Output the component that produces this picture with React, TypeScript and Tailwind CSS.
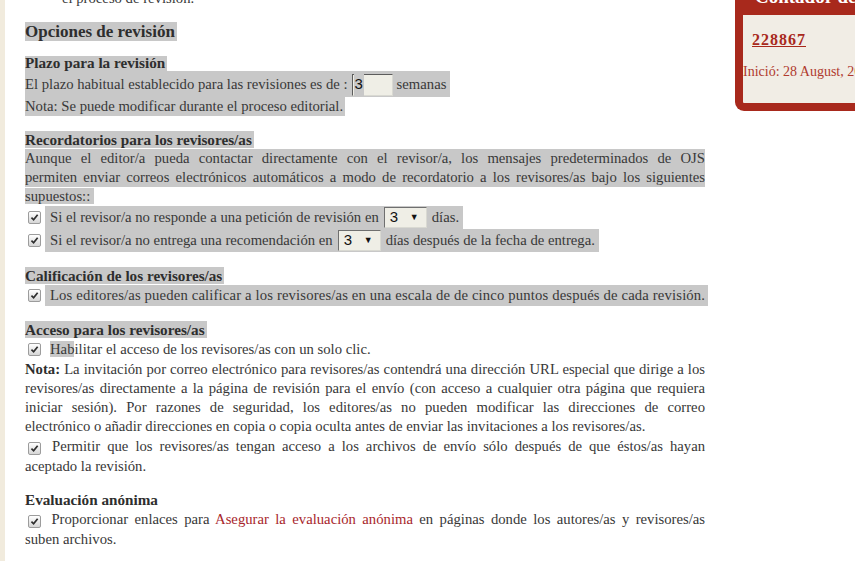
import React from "react";

const hl = "bg-[#c8c8c8]";
const lineJustify = "text-justify [text-align-last:justify]";

const Check: React.FC = () => (
  <span className="inline-flex h-[13px] w-[13px] shrink-0 items-center justify-center rounded-[2px] border border-[#9c9c9c] bg-gradient-to-b from-white to-[#d6d6d6] align-[-2px]">
    <svg viewBox="0 0 10 10" className="h-[9px] w-[9px]">
      <path d="M1.6 5.2 L4 7.5 L8.5 1.9" fill="none" stroke="#2e2e2e" strokeWidth="1.9" />
    </svg>
  </span>
);

const Select: React.FC = () => (
  <span className="mx-[5px] inline-flex h-[21px] w-[43px] items-center justify-between border border-[#6f6f6f] border-r-[#d9d9d2] border-b-[#d9d9d2] bg-[#efeee6] pl-[5px] pr-[7px] font-['Liberation_Sans',sans-serif] text-[15px] text-[#111]">
    <span>3</span>
    <span className="text-[9px]">▼</span>
  </span>
);

const Section: React.FC<{ title: string; children: React.ReactNode; mark?: boolean }> = ({
  title,
  children,
  mark = true,
}) => (
  <div className="mt-[14px]">
    <div className="h-[19px] text-[15.2px] leading-[19px]">
      <span className={`pr-[2px] font-bold text-[#2e2e2e] ${mark ? hl : ""}`}>{title}</span>
    </div>
    {children}
  </div>
);

const App: React.FC = () => {
  return (
    <div className="flex h-[561px] w-[855px] overflow-hidden bg-white font-['Liberation_Serif',serif] text-[14.7px] text-[#383838]">
      <div className="w-[5px] shrink-0 bg-[#f1ebdd]" />

      {/* main column */}
      <main className="w-[700px] shrink-0 pl-[20px]">
        <div className="-mt-[11px] pl-[37px] leading-[19px]">el proceso de revisión.</div>

        <div className="mt-[14px] h-[19px] text-[17px] leading-[19px]">
          <span className={`pr-[2px] font-bold text-[#2e2e2e] ${hl}`}>Opciones de revisión</span>
        </div>

        {/* Plazo */}
        <div className="mt-[15px]">
          <div className="flex h-[15px] items-center">
            <span className={`flex h-full items-center pr-[2px] text-[15.2px] font-bold text-[#2e2e2e] ${hl}`}>
              Plazo para la revisión
            </span>
          </div>
          <div className="flex h-[26px] items-stretch">
            <span className={`flex items-center pr-[4px] ${hl}`}>
              <span>El plazo habitual establecido para las revisiones es de :</span>
              <span className="ml-[4px] mt-[1px] flex h-[22px] w-[41px] items-center border border-[#5c5c5c] border-r-[#d9d9d2] border-b-[#d9d9d2] bg-[#efeee6] font-['Liberation_Sans',sans-serif] text-[15px] text-[#111]">
                <span className="ml-[1px] bg-[#c8c8c8] px-[1px]">3</span>
              </span>
              <span className="ml-[4px]">semanas</span>
            </span>
          </div>
          <div className="flex h-[19px] items-stretch">
            <span className={`flex items-center pr-[2px] ${hl}`}>
              Nota: Se puede modificar durante el proceso editorial.
            </span>
          </div>
        </div>

        {/* Recordatorios */}
        <Section title="Recordatorios para los revisores/as">
          <div className={`leading-[19px] ${hl}`}>
            <div className={lineJustify}>
              Aunque el editor/a pueda contactar directamente con el revisor/a, los mensajes predeterminados de OJS
            </div>
            <div className={lineJustify}>
              permiten enviar correos electrónicos automáticos a modo de recordatorio a los revisores/as bajo los siguientes
            </div>
          </div>
          <div className="leading-[19px]">
            <span className={`${hl} pr-[4px]`}>supuestos::</span>
          </div>
          <div className="flex h-[23px] items-stretch">
            <span className="flex items-center pl-[3px] pr-[4px]">
              <Check />
            </span>
            <span className={`flex items-center pl-[5px] pr-[4px] ${hl}`}>
              Si el revisor/a no responde a una petición de revisión en
              <Select />
              días.
            </span>
          </div>
          <div className="flex h-[23px] items-stretch">
            <span className="flex items-center pl-[3px] pr-[4px]">
              <Check />
            </span>
            <span className={`flex items-center pl-[5px] pr-[4px] ${hl}`}>
              Si el revisor/a no entrega una recomendación en
              <Select />
              días después de la fecha de entrega.
            </span>
          </div>
        </Section>

        {/* Calificación */}
        <Section title="Calificación de los revisores/as">
          <div className="flex h-[21px] items-stretch">
            <span className="flex items-center pl-[3px] pr-[4px]">
              <Check />
            </span>
            <span className={`flex items-center whitespace-nowrap pl-[5px] pr-[3px] tracking-[0.15px] ${hl}`}>
              Los editores/as pueden calificar a los revisores/as en una escala de de cinco puntos después de cada revisión.
            </span>
          </div>
        </Section>

        {/* Acceso */}
        <Section title="Acceso para los revisores/as">
          <div className="flex h-[21px] items-center">
            <span className="flex items-center pl-[3px] pr-[9px]">
              <Check />
            </span>
            <span>
              <span className={hl}>Hab</span>ilitar el acceso de los revisores/as con un solo clic.
            </span>
          </div>
          <div className="leading-[19px]">
            <div className={lineJustify}>
              <span className="font-bold text-[#2e2e2e]">Nota:</span> La invitación por correo electrónico para
              revisores/as contendrá una dirección URL especial que dirige a los
            </div>
            <div className={lineJustify}>
              revisores/as directamente a la página de revisión para el envío (con acceso a cualquier otra página que
              requiera
            </div>
            <div className={lineJustify}>
              iniciar sesión). Por razones de seguridad, los editores/as no pueden modificar las direcciones de correo
            </div>
            <div>
              electrónico o añadir direcciones en copia o copia oculta antes de enviar las invitaciones a los
              revisores/as.
            </div>
          </div>
          <div className={`h-[21px] leading-[21px] ${lineJustify}`}>
            <span className="ml-[3px] mr-[4px]">
              <Check />
            </span>{" "}
            Permitir que los revisores/as tengan acceso a los archivos de envío sólo después de que éstos/as hayan
          </div>
          <div className="leading-[19px]">aceptado la revisión.</div>
        </Section>

        {/* Evaluación anónima */}
        <Section title="Evaluación anónima" mark={false}>
          <div className={`h-[21px] leading-[21px] ${lineJustify}`}>
            <span className="ml-[3px] mr-[4px]">
              <Check />
            </span>{" "}
            Proporcionar enlaces para{" "}
            <a className="text-[#a8262c]">Asegurar la evaluación anónima</a> en páginas donde los autores/as y
            revisores/as
          </div>
          <div className="leading-[19px]">suben archivos.</div>
        </Section>
      </main>

      {/* sidebar */}
      <aside className="-mt-[20px] ml-[30px] w-[200px] shrink-0 self-start overflow-hidden rounded-b-[9px] border-[8px] border-t-0 border-[#a8291c] bg-[#a8291c]">
        <div className="h-[35px] whitespace-nowrap pl-[12px] pt-[8px] text-[19px] leading-[18px] font-bold text-white">
          Contador de visitas
        </div>
        <div className="h-[88px] bg-[#f1ede5] pt-[17px]">
          <div className="pl-[9px] leading-[16px]">
            <a className="text-[16px] font-bold tracking-[1px] text-[#a8291c] underline">228867</a>
          </div>
          <div className="mt-[16px] whitespace-nowrap text-[14px] leading-[16px] text-[#b03a2e]">
            Inició: 28 August, 2012
          </div>
        </div>
      </aside>
    </div>
  );
};

export default App;
